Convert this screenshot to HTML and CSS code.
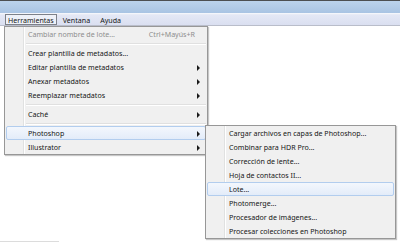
FILE: index.html
```html
<!DOCTYPE html>
<html lang="es">
<head>
    <meta charset="UTF-8">
    <title>Herramientas</title>
    <link rel="stylesheet" href="styles.css">
</head>
<body>
    <div class="titlebar"></div>

    <div class="menubar">
        <span class="menubar-item active">Herramientas</span>
        <span class="menubar-item">Ventana</span>
        <span class="menubar-item">Ayuda</span>
    </div>

    <div class="workspace">
        <!-- Herramientas dropdown -->
        <div class="menu main-menu">
            <div class="menu-item disabled">
                <span class="label">Cambiar nombre de lote...</span>
                <span class="shortcut">Ctrl+Mayús+R</span>
            </div>
            <div class="separator"></div>
            <div class="menu-item"><span class="label">Crear plantilla de metadatos...</span></div>
            <div class="menu-item has-sub"><span class="label">Editar plantilla de metadatos</span></div>
            <div class="menu-item has-sub"><span class="label">Anexar metadatos</span></div>
            <div class="menu-item has-sub"><span class="label">Reemplazar metadatos</span></div>
            <div class="separator"></div>
            <div class="menu-item has-sub"><span class="label">Caché</span></div>
            <div class="separator"></div>
            <div class="menu-item has-sub hover"><span class="label">Photoshop</span></div>
            <div class="menu-item has-sub"><span class="label">Illustrator</span></div>
        </div>

        <!-- Photoshop submenu -->
        <div class="menu sub-menu">
            <div class="menu-item"><span class="label">Cargar archivos en capas de Photoshop...</span></div>
            <div class="menu-item"><span class="label">Combinar para HDR Pro...</span></div>
            <div class="menu-item"><span class="label">Corrección de lente...</span></div>
            <div class="menu-item"><span class="label">Hoja de contactos II...</span></div>
            <div class="menu-item hover"><span class="label">Lote...</span></div>
            <div class="menu-item"><span class="label">Photomerge...</span></div>
            <div class="menu-item"><span class="label">Procesador de imágenes...</span></div>
            <div class="menu-item"><span class="label">Procesar colecciones en Photoshop</span></div>
        </div>
    </div>

    <div class="statusline"></div>
</body>
</html>
```

FILE: styles.css
```css
* {
    margin: 0;
    padding: 0;
    box-sizing: border-box;
}

body {
    font-family: 'Noto Sans', 'Liberation Sans', sans-serif;
    font-size: 7.1px;
    color: #161616;
    background-color: #ffffff;
    width: 400px;
    height: 242px;
    display: flex;
    flex-direction: column;
    overflow: hidden;
}

.titlebar {
    height: 14px;
    border-top: 1px solid #4d4f52;
    background: linear-gradient(#bcd3ec, #a9c4e3);
    border-bottom: 1px solid #f4f6fb;
}

.menubar {
    height: 12px;
    display: flex;
    align-items: stretch;
    gap: 2px;
    padding-left: 5px;
    background: linear-gradient(#e4e8f5, #dadff0);
    border-top: 1px solid #e9ecf6;
    border-bottom: 1px solid #b9bdca;
}

.menubar-item {
    display: flex;
    align-items: center;
    padding: 0 3px;
    border: 1px solid transparent;
    margin-top: -1px;
}

.menubar-item.active {
    border-color: #7d8189;
    background-color: #eef1f8;
    padding: 0 2px;
}

.workspace {
    flex: 1;
    position: relative;
}

.menu {
    position: absolute;
    background-color: #f0f0f0;
    border: 1px solid #979797;
    box-shadow: 1px 1px 1px rgba(0, 0, 0, 0.22);
    display: flex;
    flex-direction: column;
}

/* icon gutter */
.menu::before {
    content: '';
    position: absolute;
    top: 0;
    bottom: 0;
    left: 18px;
    width: 1px;
    background-color: #e0e1e1;
    box-shadow: 1px 0 0 #ffffff;
}

.main-menu {
    left: 4px;
    top: 0;
    width: 204px;
}

.sub-menu {
    left: 205px;
    top: 99px;
    width: 191px;
}

.menu-item {
    position: relative;
    height: 14px;
    display: flex;
    align-items: center;
    padding-left: 21px;
    padding-right: 12px;
    margin: 0 1px;
    border: 1px solid transparent;
    border-radius: 2px;
    white-space: nowrap;
}

.menu-item .label {
    flex: 1;
}

.menu-item.disabled {
    color: #8e8e8e;
}

.menu-item .shortcut {
    margin-right: -2px;
}

.menu-item.hover {
    border-color: #b2cdee;
    background: linear-gradient(#f3f7fd, #e3ecf9);
}

.menu-item.has-sub::after {
    content: '';
    position: absolute;
    right: 5px;
    top: 4px;
    border-left: 3px solid #1a1a1a;
    border-top: 3px solid transparent;
    border-bottom: 3px solid transparent;
}

.separator {
    height: 5px;
    margin-left: 21px;
    position: relative;
}

.separator::after {
    content: '';
    position: absolute;
    left: 0;
    right: 1px;
    top: 2px;
    height: 1px;
    background-color: #e0e0e0;
    box-shadow: 0 1px 0 #ffffff;
}

.statusline {
    width: 59px;
    height: 1px;
    background-color: #dcdcdc;
}
```
